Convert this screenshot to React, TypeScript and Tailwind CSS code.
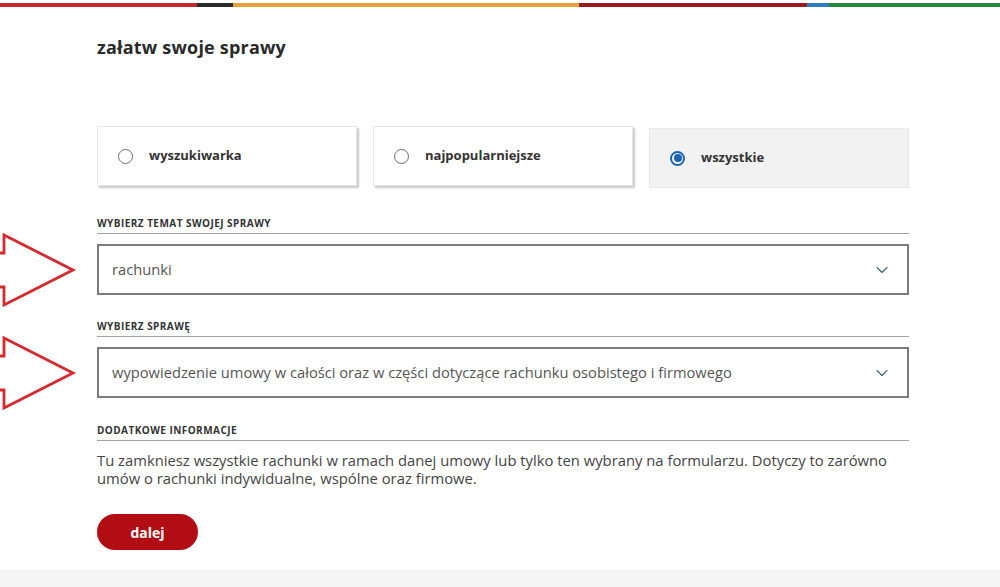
import { ChevronDown } from 'lucide-react'

const options = [
    { id: 'search', label: 'wyszukiwarka', checked: false },
    { id: 'popular', label: 'najpopularniejsze', checked: false },
    { id: 'all', label: 'wszystkie', checked: true },
]

function Radio({ checked }: { checked: boolean }) {
    if (checked) {
        return (
            <span className="w-[15px] h-[15px] rounded-full border-2 border-[#1a64b8] flex items-center justify-center shrink-0">
                <span className="w-[8px] h-[8px] rounded-full bg-[#1a64b8]" />
            </span>
        )
    }
    return <span className="w-[15px] h-[15px] rounded-full border-[1.5px] border-[#6b6b6b] shrink-0" />
}

function Select({ value }: { value: string }) {
    return (
        <div className="mt-[10px] h-[51px] border-2 border-[#7c7c7c] flex items-center justify-between pl-[13px] pr-[15px]">
            <span className="text-[14.7px] text-[#555]">{value}</span>
            <ChevronDown className="w-[20px] h-[20px] text-[#3b6476]" strokeWidth={1.3} />
        </div>
    )
}

function Label({ text }: { text: string }) {
    return (
        <div className="text-[10px] font-bold tracking-[0.45px] text-[#333] leading-[14px] pb-[3px] border-b border-[#a3a3a3] uppercase">
            {text}
        </div>
    )
}

// red outline arrow drawn on top of the screenshot
function Arrow({ top }: { top: number }) {
    return (
        <svg className="absolute left-0" style={{ top }} width="80" height="80" viewBox="0 0 80 80" fill="none">
            <path d="M-4 20 L4 20 L4 2 L73 37 L4 72 L4 54 L-4 54" stroke="#d42a2f" strokeWidth="2.8" strokeLinejoin="miter" />
        </svg>
    )
}

export default function App() {
    return (
        <div className="min-h-screen bg-white flex flex-col relative overflow-hidden" style={{ fontFamily: '"Open Sans", "Liberation Sans", sans-serif' }}>
            <div className="pt-[3px]">
                <div className="flex h-[4px]">
                    <div className="w-[197px] bg-[#c8262d]" />
                    <div className="w-[36px] bg-[#2b2b2b]" />
                    <div className="w-[346px] bg-[#e5a23a]" />
                    <div className="w-[228px] bg-[#9b1a1e]" />
                    <div className="w-[22px] bg-[#2d7bc0]" />
                    <div className="flex-1 bg-[#21893c]" />
                </div>
            </div>

            <div className="w-[812px] ml-[97px]">
                <h1 className="mt-[28px] text-[18px] leading-[24px] font-bold text-[#2a2a2a] tracking-[0.2px]">załatw swoje sprawy</h1>

                <div className="mt-[67px] grid grid-cols-3 gap-[16px] items-start">
                    {options.map((opt) =>
                        opt.checked ? (
                            <div key={opt.id} className="mt-[2px] h-[60px] bg-[#f2f2f2] border border-[#e8e8e8] flex items-center gap-[16px] pl-[20px]">
                                <Radio checked />
                                <span className="text-[13px] font-bold text-[#333]">{opt.label}</span>
                            </div>
                        ) : (
                            <div key={opt.id} className="h-[60px] bg-white border border-[#e6e6e6] shadow-[2px_2px_2px_rgba(0,0,0,0.22)] flex items-center gap-[16px] pl-[20px]">
                                <Radio checked={false} />
                                <span className="text-[13px] font-bold text-[#333]">{opt.label}</span>
                            </div>
                        )
                    )}
                </div>

                <div className="mt-[28px]">
                    <Label text="Wybierz temat swojej sprawy" />
                    <Select value="rachunki" />
                </div>

                <div className="mt-[24px]">
                    <Label text="Wybierz sprawę" />
                    <Select value="wypowiedzenie umowy w całości oraz w części dotyczące rachunku osobistego i firmowego" />
                </div>

                <div className="mt-[25px]">
                    <Label text="Dodatkowe informacje" />
                    <p className="mt-[10px] text-[14.8px] leading-[18px] text-[#444]">
                        Tu zamkniesz wszystkie rachunki w ramach danej umowy lub tylko ten wybrany na formularzu. Dotyczy to zarówno umów o rachunki indywidualne, wspólne oraz firmowe.
                    </p>
                </div>

                <button className="mt-[27px] w-[101px] h-[36px] rounded-full bg-[#b10d13] text-white text-[14px] font-bold">
                    dalej
                </button>
            </div>

            <div className="mt-[20px] flex-1 bg-[#f5f5f5]" />

            <Arrow top={233} />
            <Arrow top={336} />
        </div>
    )
}
